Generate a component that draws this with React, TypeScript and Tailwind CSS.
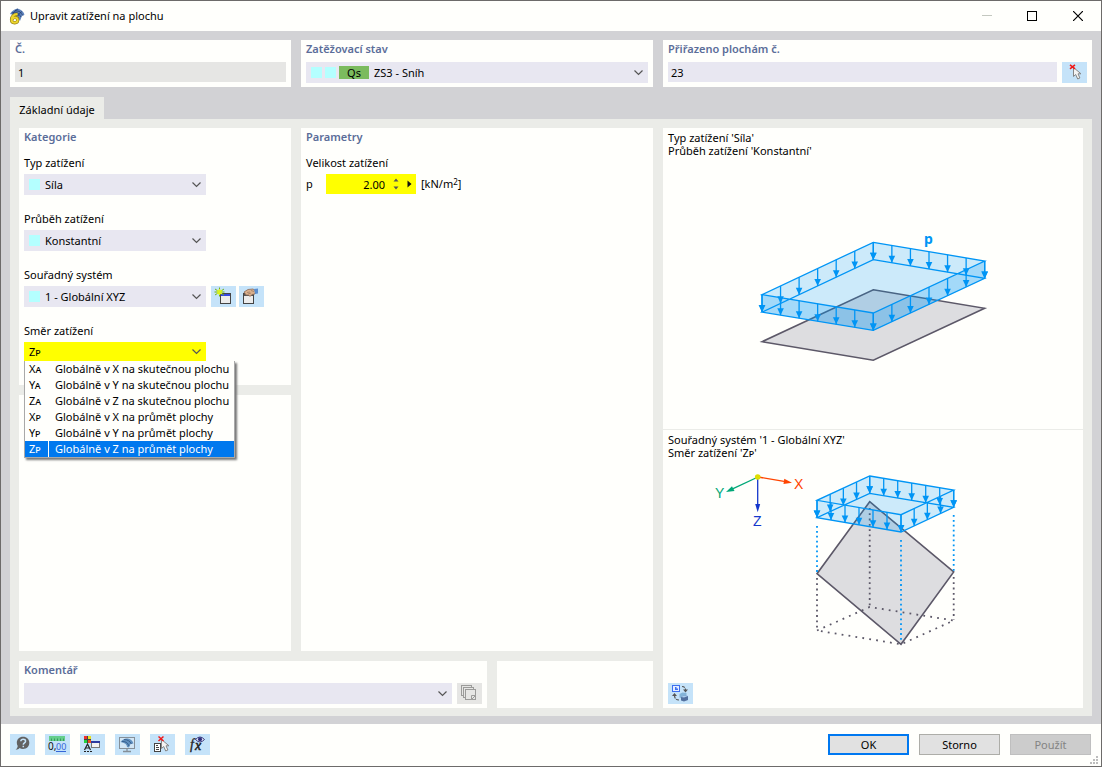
import { useId, useState } from "react";
import type { ReactNode } from "react";
import clsx from "clsx";

type Point = [number, number];

const directions = [
  { code: "Xa", label: "Globálně v X na skutečnou plochu" },
  { code: "Ya", label: "Globálně v Y na skutečnou plochu" },
  { code: "Za", label: "Globálně v Z na skutečnou plochu" },
  { code: "Xp", label: "Globálně v X na průmět plochy" },
  { code: "Yp", label: "Globálně v Y na průmět plochy" },
  { code: "Zp", label: "Globálně v Z na průmět plochy" },
];

const smallCaps = "[font-variant-caps:small-caps]";

/* ---------- building blocks ---------- */

function Card({ className, children }: { className?: string; children?: ReactNode }) {
  return <section className={clsx("min-w-0 bg-[#fffffc] px-[5px]", className)}>{children}</section>;
}

function Heading({ children }: { children: ReactNode }) {
  return <h2 className="pt-px leading-4 font-semibold text-[#5b6d99]">{children}</h2>;
}

function Swatch() {
  return <span className="size-[11px] shrink-0 bg-[#b4ffff]" />;
}

function Chevron() {
  return (
    <svg width="9" height="6" viewBox="0 0 9 6" className="pointer-events-none mr-[5px] -ml-[14px] shrink-0">
      <path d="M.5 .5 4.5 4.5 8.5 .5" fill="none" stroke="#555" strokeWidth="1.2" />
    </svg>
  );
}

interface ComboProps {
  id: string;
  options: string[];
  value?: string;
  onChange?: (value: string) => void;
  lead?: ReactNode;
  className?: string;
}

function Combo({ id, options, value, onChange, lead, className }: ComboProps) {
  return (
    <div className={clsx("flex items-center", className ?? "h-[21px] bg-[#e8e7f1]")}>
      {lead && <div className="flex shrink-0 items-center gap-[3px] pl-[5px]">{lead}</div>}
      <select
        id={id}
        value={value}
        onChange={(e) => onChange?.(e.target.value)}
        className="h-full min-w-0 flex-1 appearance-none bg-transparent pt-px pr-4 pl-[5px] outline-none"
      >
        {options.map((o) => (
          <option key={o}>{o}</option>
        ))}
      </select>
      <Chevron />
    </div>
  );
}

function Field({ label, options, children }: { label: string; options: string[]; children?: ReactNode }) {
  const id = useId();
  return (
    <div className="flex flex-col gap-[3px]">
      <label htmlFor={id} className="leading-4">{label}</label>
      <div className="flex gap-[3px]">
        <Combo id={id} options={options} lead={<Swatch />} className="mr-[2px] h-[21px] w-[182px] bg-[#e8e7f1]" />
        {children}
      </div>
    </div>
  );
}

function IconButton({ label, disabled, children }: { label: string; disabled?: boolean; children: ReactNode }) {
  return (
    <button
      type="button"
      aria-label={label}
      disabled={disabled}
      className={clsx("h-[21px] w-[25px] shrink-0", disabled ? "bg-[#e6e6e4]" : "bg-[#c5e3f9] hover:bg-[#aed8f7]")}
    >
      <svg width="25" height="21" viewBox="0 0 25 21">{children}</svg>
    </button>
  );
}

/* ---------- icons ---------- */

function Cursor() {
  return (
    <path
      d="M11.5 5.5v9l2.2-2 2 4.5 2.2-1-1.9-4.2h3z"
      fill="#f4f4f4"
      stroke="#858585"
      strokeWidth="1"
    />
  );
}

function PickIcon() {
  return (
    <>
      <Cursor />
      <path d="M8 2.8l5 4M13 2.8l-5 4" stroke="#f01818" strokeWidth="1.5" />
    </>
  );
}

function NewIcon() {
  return (
    <>
      <rect x="9.5" y="7.5" width="10" height="10" fill="#ececec" stroke="#444" />
      <path d="M10 9h9" stroke="#3447e0" strokeWidth="2" />
      <path d="M8.5 1.5v9M4 3l9 6M13 3 4 9M3.5 6h10" stroke="#6fae1c" strokeWidth="1" />
      <path d="M8.5 3v6M6 4.5l5 3M11 4.5l-5 3" stroke="#d9f21c" strokeWidth="1.5" />
    </>
  );
}

function EditIcon() {
  return (
    <>
      <rect x="4.5" y="7.5" width="10" height="10" fill="#ececec" stroke="#444" />
      <path d="M5 9h9" stroke="#555" strokeWidth="2" />
      <path d="M5 6l4-2.5 5-.5 3 2-1 3-3 .5-2 2-1.5-1.500L7 9z" fill="#dbb08c" stroke="#8b6b58" strokeWidth=".8" />
      <path d="M8 6.500l3-.5M9 8l3-1M12 4.500l3 1" stroke="#8b6b58" strokeWidth=".6" />
      <path d="M15 3l4-.5v5l-3 .5z" fill="#5c8fd0" />
    </>
  );
}

function CopyIcon() {
  return (
    <g fill="#e6e6e4" stroke="#9b9b99">
      <rect x="4.5" y="2.5" width="10" height="10" />
      <rect x="6.5" y="4.5" width="10" height="10" />
      <rect x="8.5" y="6.5" width="10" height="10" />
      <path d="M14.5 16.5v-4h4" />
      <path d="M15 16l3-3" />
    </g>
  );
}

function SwitchIcon() {
  return (
    <>
      <rect x="4.5" y="2.5" width="7" height="6" fill="#e4eeff" stroke="#3d6ff0" />
      <path d="M7 4v3h3V5.5H8.5V4z" fill="#3d6ff0" />
      <path d="M14 3.500q3.500 0 3.500 4M11 17q-4.500 0-4.500-5" fill="none" stroke="#555" strokeWidth="1.200" strokeDasharray="3 1" />
      <path d="M15 6.500h5l-2.500 3zM4 13h5l-2.500-3z" fill="#555" />
      <path d="M11.500 11l3-1.500 4 .5v4l-4 1.500-3-1z" fill="#83b4d8" />
      <path d="M13 14l3-1.500 4 .5v4l-4 1.500-3-1z" fill="#53719f" />
      <path d="M13 14l3-1.500 4 .5-4 1.500z" fill="#a9cdee" />
    </>
  );
}

function HelpIcon() {
  return (
    <>
      <path d="M13 2.8c3.800 0 6.300 2.600 6.300 6s-2.500 6.200-6.300 6.200c-1.400 0-2.500-.3-3.400-.9-.8.900-2.200 1.600-4 1.600 1.300-.9 2-2 2.100-3.600-.5-.9-.9-2-.9-3.300 0-3.400 2.500-6 6.200-6z" fill="#626262" />
      <path d="M10.800 7.300q.2-2 2.400-2t2.400 1.800q0 1.200-1.300 1.900-1 .5-1 1.700M13.300 11.700v1.500" fill="none" stroke="#c5e3f9" strokeWidth="1.500" />
    </>
  );
}

function UnitsIcon() {
  return (
    <>
      <rect x="4" y="2" width="16" height="5" fill="#65cf8b" />
      <path d="M6.5 4.500V7M9.500 4.500V7M12.500 4.500V7M15.500 4.500V7M18.500 4.500V7" stroke="#3a9860" />
      <text x="3" y="16" fontSize="10" fill="#111">0,</text>
      <text x="11" y="16" fontSize="9" fill="#3566d8">00</text>
      <path d="M11 17.500h10" stroke="#3566d8" />
    </>
  );
}

function DisplayIcon() {
  return (
    <>
      <rect x="4" y="2" width="7" height="7" fill="#444" />
      <rect x="4" y="2" width="3" height="3" fill="#f03030" />
      <rect x="8" y="2" width="3" height="3" fill="#e8e020" />
      <rect x="4" y="6" width="3" height="3" fill="#25d040" />
      <rect x="8" y="6" width="3" height="3" fill="#e85020" />
      <path d="M4.500 16l3-6 3 6M6 14h3.500" fill="none" stroke="#222" strokeWidth="1.200" />
      <path d="M4 17.500h8" stroke="#222" strokeDasharray="2 1" />
      <rect x="11.500" y="7.500" width="8" height="6" fill="#f2f2f2" stroke="#777" />
      <path d="M11 8h9" stroke="#2c3aa0" strokeWidth="2" />
    </>
  );
}

function ScreenIcon() {
  return (
    <>
      <rect x="4.5" y="3.5" width="15" height="11" fill="#d2e6f5" stroke="#858f98" />
      <path d="M12 15v2M8 17.500h8" stroke="#858f98" strokeWidth="1.300" />
      <path d="M5.500 8q3-4 7-3.500 4.500.5 6 5l-3 .5-1.500 3.500-2-.5q0-4-6.500-5z" fill="#5f8fbe" />
      <path d="M7 7.500q5-.5 7 4.500M9 5.500q5 0 7.500 4.500" fill="none" stroke="#254b78" strokeWidth=".7" />
    </>
  );
}

function DeselectIcon() {
  return (
    <>
      <rect x="4.500" y="9.500" width="6" height="8" fill="#fff" stroke="#444" />
      <path d="M6 11.500h2M6 13.500h3M6 15.500h3" stroke="#444" />
      <Cursor />
      <path d="M8.500 2.500l5 4.500M13.500 2.500l-5 4.500" stroke="#f01818" strokeWidth="1.500" />
    </>
  );
}

function FormulaIcon() {
  return (
    <>
      <text x="5" y="15" fontSize="14" fontStyle="italic" fontFamily="Liberation Serif, serif" fill="#222" stroke="#222" strokeWidth=".3">f</text>
      <text x="10" y="16" fontSize="14" fontStyle="italic" fontFamily="Liberation Serif, serif" fill="#222" stroke="#222" strokeWidth=".5">x</text>
      <path d="M10.500 5.500q4.500-5 9 0-4.500 5-9 0z" fill="#dcdff5" stroke="#3c3f80" />
      <circle cx="15" cy="5.300" r="2" fill="#2e2f7c" />
    </>
  );
}

function AppIcon() {
  return (
    <svg width="16" height="17" viewBox="0 0 16 17">
      <path d="M1 6Q3.500 1.500 8.500.5q5.500 1.500 7 6L13 8q-1 2-2 5L8 8z" fill="#5d82bb" />
      <path d="M3 5q5-3 9 4M6 2.500q5-.5 8 5M9 1Q6 2 4 6M13 3.500Q9.500 5 9 8" fill="none" stroke="#24406e" strokeWidth=".8" />
      <path d="M8.500 6Q3 6.500 2.500 11.500q0 3.300 3.200 3.300 3 0 3-2.800 0-2.600-2.700-2.600-2.500 0-3.200 2.300" fill="none" stroke="#8a7410" strokeWidth="3.200" />
      <path d="M8.500 6Q3 6.500 2.500 11.500q0 3.300 3.200 3.300 3 0 3-2.800 0-2.600-2.700-2.600-2.500 0-3.200 2.300" fill="none" stroke="#ecd52c" strokeWidth="2" />
    </svg>
  );
}

/* ---------- drawings ---------- */

const path = (points: Point[]) => "M" + points.map((p) => p.join(" ")).join("L") + "Z";

function Arrows({ from, to, count, height }: { from: Point; to: Point; count: number; height: number }) {
  return (
    <>
      {Array.from({ length: count + 1 }, (_, i) => {
        const x = from[0] + ((to[0] - from[0]) * i) / count;
        const y = from[1] + ((to[1] - from[1]) * i) / count;
        return (
          <g key={i}>
            <path d={`M${x} ${y}v${height}`} stroke="#0095f5" strokeWidth="1.3" />
            <path d={`M${x - 3.3} ${y + height - 7}h6.6l-3.3 7z`} fill="#0095f5" />
          </g>
        );
      })}
    </>
  );
}

// The load volume over a surface: back, right, front and left corner of its upper face
function LoadVolume({ corners, counts, height, shaded }: { corners: Point[]; counts: [number, number]; height: number; shaded?: boolean }) {
  const [a, b, c, d] = corners;
  const low = corners.map(([x, y]): Point => [x, y + height]);
  return (
    <g>
      <path d={path([a, b, low[1], low[2], low[3], d])} fill="#0095f5" fillOpacity=".2" />
      {shaded && <path d={path([d, c, b, low[1], low[2], low[3]])} fill="#0095f5" fillOpacity=".2" />}
      <path d={path(corners) + path(low)} fill="none" stroke="#0095f5" strokeWidth="1.3" />
      <Arrows from={a} to={b} count={counts[0]} height={height} />
      <Arrows from={a} to={d} count={counts[1]} height={height} />
      <Arrows from={d} to={c} count={counts[0]} height={height} />
      <Arrows from={c} to={b} count={counts[1]} height={height} />
    </g>
  );
}

function LoadTypeDrawing() {
  return (
    <svg width="240" height="140" viewBox="753 224 240 140" role="img" aria-label="p">
      <path
        d="M873.3 289.7 984.7 308.3 873.3 360.3 762 341.7z"
        fill="#dddde0"
        stroke="#5c5868"
        strokeWidth="1.5"
      />
      <LoadVolume
        corners={[[873.3, 242.3], [984.7, 261], [873.3, 313], [762, 294.7]]}
        counts={[6, 6]}
        height={17.4}
        shaded
      />
      <text x="924" y="244" fontSize="14" fontWeight="bold" fill="#0095f5">p</text>
    </svg>
  );
}

function DirectionDrawing() {
  return (
    <svg width="320" height="185" viewBox="713 467 320 185" role="img" aria-label="X Y Z">
      <g fontFamily="Liberation Sans, sans-serif" fontSize="14">
        <path d="M758 477 784 481.3" stroke="#ff4400" strokeWidth="1.3" />
        <path d="M792 482.7 783.5 484 784.3 478.8z" fill="#ff4400" />
        <text x="794" y="489" fill="#ff4400">X</text>
        <path d="M758 477 732 489.2" stroke="#00a878" strokeWidth="1.3" />
        <path d="M726 492 732 486.3 734.5 491z" fill="#00a878" />
        <text x="715" y="498" fill="#00a878">Y</text>
        <path d="M757.7 477V506" stroke="#1437cc" strokeWidth="1.3" />
        <path d="M757.7 512.3 755.2 504h5z" fill="#1437cc" />
        <text x="753" y="526" fill="#1437cc">Z</text>
        <circle cx="757.7" cy="477" r="2.8" fill="#dede00" />
      </g>
      <path
        d="M869.7 501.7 953.7 572 901 644.3 817 573.7z"
        fill="#dddde0"
        stroke="#5c5868"
        strokeWidth="1.6"
      />
      <g fill="none" stroke="#5c5868" strokeWidth="1.8">
        <path d="M869.7 508V607M817 578v52M953.7 577v43" strokeDasharray="1.8 3.5" />
        <path d="M817 630.5 869.7 607 953.7 620.5 901 644.3z" strokeDasharray="1.8 5.2" />
      </g>
      <path
        d="M817 526v46M901 540v102M953.7 515v56"
        stroke="#0095f5"
        strokeWidth="1.8"
        strokeDasharray="1.8 3.1"
      />
      <LoadVolume
        corners={[[869.7, 476], [953.7, 490], [901, 514.7], [817, 500.3]]}
        counts={[6, 4]}
        height={17.3}
      />
    </svg>
  );
}

/* ---------- dialog ---------- */

function TitleBar() {
  return (
    <header className="flex h-[30px] shrink-0 items-center bg-[#fffffc] pl-2">
      <AppIcon />
      <h1 className="min-w-0 flex-1 truncate pl-[5px]">Upravit zatížení na plochu</h1>
      <button type="button" aria-label="Minimalizovat" disabled className="flex h-full w-[45px] items-center justify-center">
        <svg width="10" height="10" viewBox="0 0 10 10"><path d="M0 4.500h10" stroke="#c4c8c0" /></svg>
      </button>
      <button type="button" aria-label="Maximalizovat" className="flex h-full w-[46px] items-center justify-center">
        <svg width="10" height="10" viewBox="0 0 10 10"><rect x=".5" y=".5" width="9" height="9" fill="none" stroke="#000" /></svg>
      </button>
      <button type="button" aria-label="Zavřít" className="flex h-full w-[46px] items-center justify-center">
        <svg width="10" height="10" viewBox="0 0 10 10"><path d="M0 0 10 10M10 0 0 10" stroke="#000" strokeWidth="1.2" /></svg>
      </button>
    </header>
  );
}

function DirectionField() {
  const [code, setCode] = useState("Zp");
  return (
    <div className="flex flex-col gap-[3px]">
      <label htmlFor="direction" className="leading-4">Směr zatížení</label>
      <div className="relative w-[182px]">
        <Combo
          id="direction"
          value={code}
          onChange={setCode}
          options={directions.map((d) => d.code)}
          className={clsx("h-5 bg-[#ffff00]", smallCaps)}
        />
        <ul
          role="listbox"
          aria-label="Směr zatížení"
          className="absolute top-[19px] left-0 z-10 w-[211px] border border-t-0 border-[#a9a9a9] bg-[#fffffc] shadow-[2px_2px_2px_#777]"
        >
          {directions.map((d) => (
            <li
              key={d.code}
              role="option"
              aria-selected={d.code === code}
              onClick={() => setCode(d.code)}
              className={clsx(
                "flex h-4 cursor-default whitespace-nowrap leading-4",
                d.code === code && "bg-[#0078ee] text-white",
              )}
            >
              <span className={clsx("w-6 shrink-0 border-r border-[#fffffc] pl-1", smallCaps)}>{d.code}</span>
              <span className="pl-[6px]">{d.label}</span>
            </li>
          ))}
        </ul>
      </div>
    </div>
  );
}

function Category() {
  return (
    <Card className="pb-[23px]">
      <Heading>Kategorie</Heading>
      <div className="mt-[10px] flex flex-col gap-4">
        <Field label="Typ zatížení" options={["Síla"]} />
        <Field label="Průběh zatížení" options={["Konstantní"]} />
        <Field label="Souřadný systém" options={["1 - Globální XYZ"]}>
          <IconButton label="Nový souřadný systém"><NewIcon /></IconButton>
          <IconButton label="Upravit souřadný systém"><EditIcon /></IconButton>
        </Field>
        <DirectionField />
      </div>
    </Card>
  );
}

function Parameters() {
  return (
    <Card>
      <Heading>Parametry</Heading>
      <p className="mt-[10px] leading-4">Velikost zatížení</p>
      <div className="mt-[3px] flex h-5 items-center">
        <label htmlFor="load" className="w-5">p</label>
        <div className="flex h-full w-[90px] items-center gap-2 bg-[#ffff00] pr-1">
          <input id="load" defaultValue="2.00" className="h-full w-[60px] min-w-0 bg-transparent text-right outline-none" />
          <button type="button" aria-label="Změnit hodnotu">
            <svg width="6" height="12" viewBox="0 0 6 12"><path d="M.5 3.500 3 .5l2.500 3zM.5 8.500l2.500 3 2.500-3z" fill="#555" /></svg>
          </button>
          <button type="button" aria-label="Další možnosti">
            <svg width="5" height="8" viewBox="0 0 5 8"><path d="M.5 .5v7L4.500 4z" fill="#111" /></svg>
          </button>
        </div>
        <span className="pl-[5px]">[kN/m<sup className="top-[-3px] text-[8px]">2</sup>]</span>
      </div>
    </Card>
  );
}

function Preview() {
  return (
    <div className="flex min-w-0 flex-col bg-[#fffffc] leading-[13px]">
      <div className="flex flex-[304] flex-col border-b border-[#ebece8] px-[5px] pt-[3px]">
        <p>Typ zatížení 'Síla'</p>
        <p>Průběh zatížení 'Konstantní'</p>
        <div className="flex flex-1 items-center justify-center pt-px">
          <LoadTypeDrawing />
        </div>
      </div>
      <div className="flex flex-[276] flex-col px-[5px] pt-[3px] pb-1">
        <p>Souřadný systém '1 - Globální XYZ'</p>
        <p>Směr zatížení '<span className={smallCaps}>Zp</span>'</p>
        <div className="flex flex-1 justify-center pt-2">
          <DirectionDrawing />
        </div>
        <IconButton label="Přepnout zobrazení"><SwitchIcon /></IconButton>
      </div>
    </div>
  );
}

function Footer() {
  const action = "h-[21px] w-[81px] pt-px";
  return (
    <footer className="flex shrink-0 gap-[10px] bg-[#fffffc] pt-[10px] pr-[10px] pb-[11px] pl-[9px]">
      <IconButton label="Nápověda"><HelpIcon /></IconButton>
      <IconButton label="Jednotky a desetinná místa"><UnitsIcon /></IconButton>
      <IconButton label="Zobrazení"><DisplayIcon /></IconButton>
      <IconButton label="Náhled"><ScreenIcon /></IconButton>
      <IconButton label="Zrušit výběr"><DeselectIcon /></IconButton>
      <IconButton label="Vzorce"><FormulaIcon /></IconButton>
      <div className="relative ml-auto flex gap-[10px]">
        <button type="button" className={clsx(action, "border-2 border-[#0078f0] bg-[#e1e1e1]")}>OK</button>
        <button type="button" className={clsx(action, "border border-[#adada8] bg-[#e1e1e1]")}>Storno</button>
        <button type="button" disabled className={clsx(action, "border border-[#bfbfbf] bg-[#cccccc] text-[#838383]")}>Použít</button>
        <svg width="8" height="8" viewBox="0 0 8 8" className="absolute -right-[7px] -bottom-[9px]">
          <path d="M6 0h2v2H6zM3 3h2v2H3zM6 3h2v2H6zM0 6h2v2H0zM3 6h2v2H3zM6 6h2v2H6z" fill="#bdbdbd" />
        </svg>
      </div>
    </footer>
  );
}

export default function App() {
  return (
    <div className="flex min-h-screen flex-col border border-[#6d6b6a] bg-[#d2d2d5] font-['Noto_Sans','Open_Sans',sans-serif] text-[11px] text-black">
      <TitleBar />

      <main className="flex flex-1 flex-col px-[9px] pt-[9px] pb-2">
        <div className="grid grid-cols-[281fr_352fr_429fr] gap-[10px]">
          <Card className="flex flex-col gap-[5px] pb-1">
            <Heading><label htmlFor="number">Č.</label></Heading>
            <input id="number" readOnly value="1" className="h-5 w-full bg-[#e6e6e4] px-[3px] pt-px outline-none" />
          </Card>
          <Card className="flex flex-col gap-[5px] pb-1">
            <Heading><label htmlFor="load-case">Zatěžovací stav</label></Heading>
            <Combo
              id="load-case"
              options={["ZS3 - Sníh"]}
              lead={
                <>
                  <Swatch />
                  <Swatch />
                  <span className="h-[13px] w-[30px] bg-[#7bbb5e] text-center leading-[13px]">Qs</span>
                </>
              }
            />
          </Card>
          <Card className="flex flex-col gap-[5px] pb-1">
            <Heading><label htmlFor="surfaces">Přiřazeno plochám č.</label></Heading>
            <div className="flex gap-[5px]">
              <input id="surfaces" defaultValue="23" className="h-5 min-w-0 flex-1 bg-[#e8e7f1] px-[3px] pt-px outline-none" />
              <IconButton label="Vybrat plochy"><PickIcon /></IconButton>
            </div>
          </Card>
        </div>

        <div role="tablist" className="mt-[10px] flex">
          <button type="button" role="tab" aria-selected className="h-[22px] w-[94px] bg-[#ebece8] pt-1">
            Základní údaje
          </button>
        </div>

        <div role="tabpanel" className="grid flex-1 grid-cols-[634fr_420fr] gap-[10px] bg-[#ebece8] px-[9px] pt-[9px] pb-2">
          <div className="flex min-w-0 flex-col gap-[10px]">
            <div className="grid flex-1 grid-cols-[272fr_352fr] gap-[10px]">
              <div className="flex min-w-0 flex-col gap-[10px]">
                <Category />
                <Card className="flex-1" />
              </div>
              <Parameters />
            </div>
            <div className="grid grid-cols-[468fr_156fr] gap-[10px]">
              <Card className="flex flex-col gap-[5px] pb-1">
                <Heading><label htmlFor="comment">Komentář</label></Heading>
                <div className="flex gap-[5px]">
                  <Combo id="comment" options={[""]} className="h-[21px] min-w-0 flex-1 bg-[#e8e7f1]" />
                  <IconButton label="Kopírovat komentář" disabled><CopyIcon /></IconButton>
                </div>
              </Card>
              <Card />
            </div>
          </div>
          <Preview />
        </div>
      </main>

      <Footer />
    </div>
  );
}
